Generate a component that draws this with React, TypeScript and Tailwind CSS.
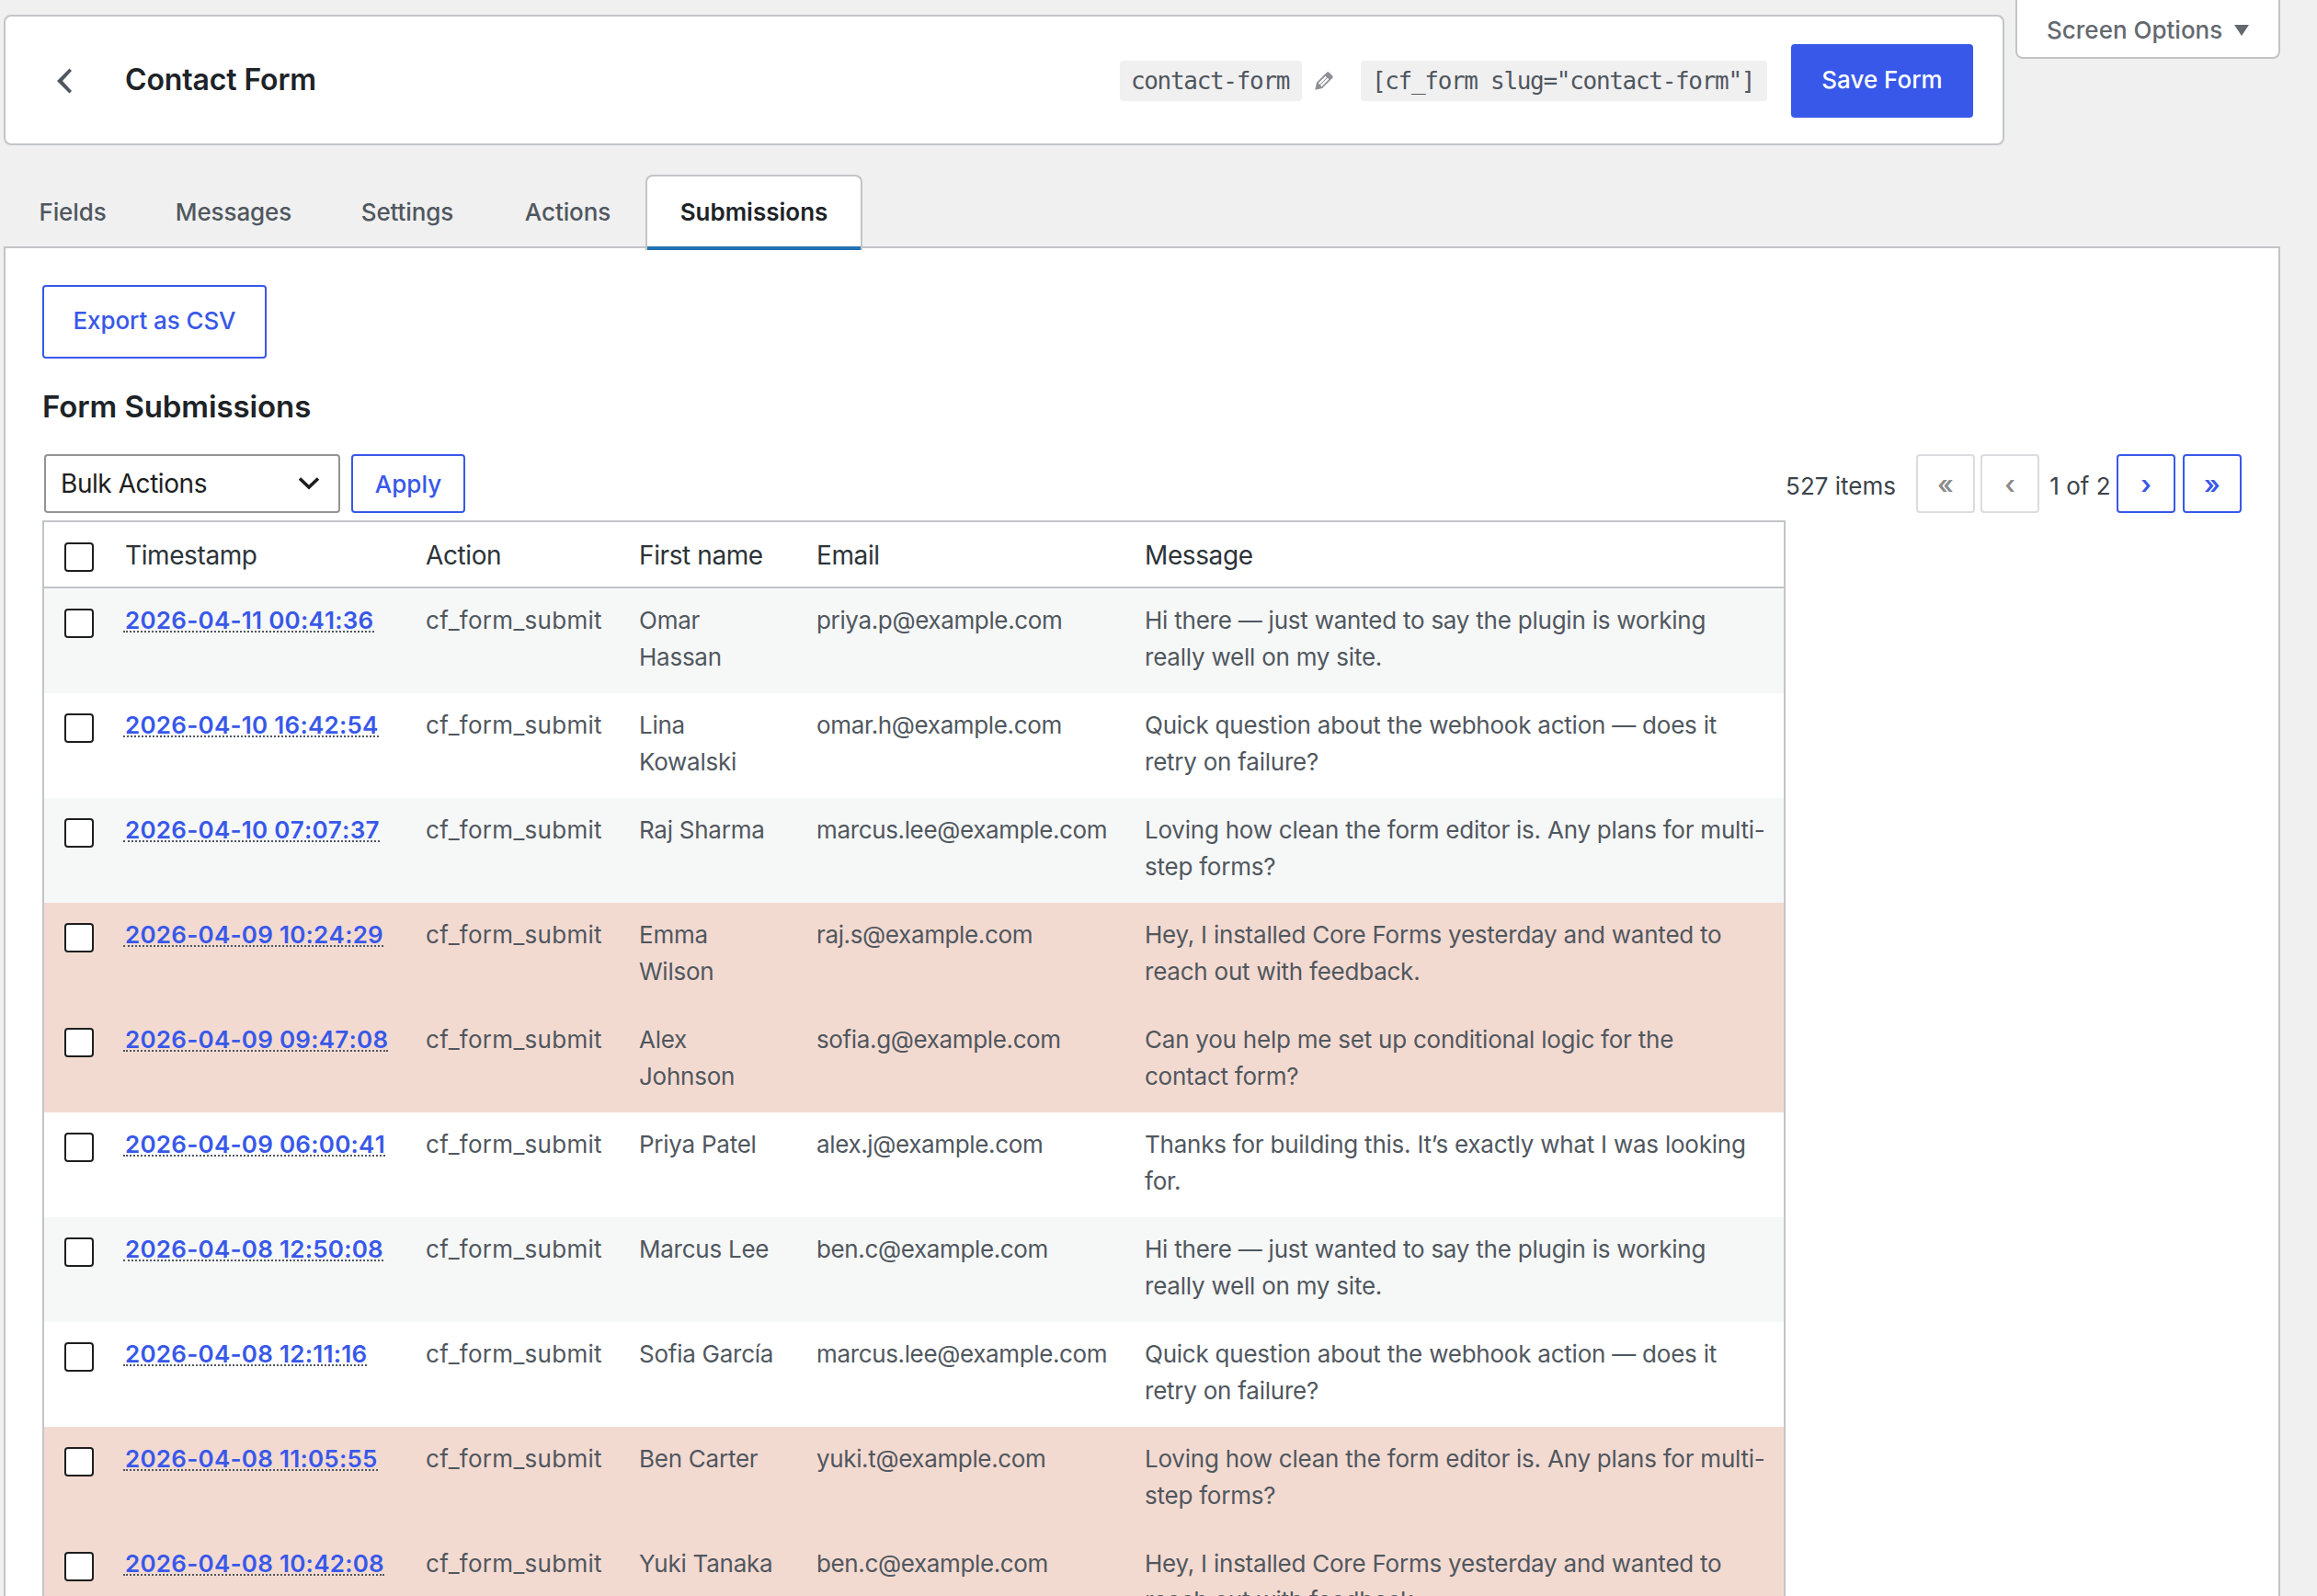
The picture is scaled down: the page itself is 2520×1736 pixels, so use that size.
import React from 'react';

const tabs = [
    { label: 'Fields', width: 'w-[148px] pl-0.5' },
    { label: 'Messages', width: 'w-[201px] pl-[3px]' },
    { label: 'Settings', width: 'w-[180px]' },
    { label: 'Actions', width: 'w-[169px]' },
    { label: 'Submissions', width: 'w-[236px]', active: true },
];

const messages = [
    ['Hi there — just wanted to say the plugin is working', 'really well on my site.'],
    ['Quick question about the webhook action — does it', 'retry on failure?'],
    ['Loving how clean the form editor is. Any plans for multi-', 'step forms?'],
    ['Hey, I installed Core Forms yesterday and wanted to', 'reach out with feedback.'],
    ['Can you help me set up conditional logic for the', 'contact form?'],
    ['Thanks for building this. It’s exactly what I was looking', 'for.'],
];

const rows = [
    { time: '2026-04-11 00:41:36', name: ['Omar', 'Hassan'], email: 'priya.p@example.com', message: messages[0] },
    { time: '2026-04-10 16:42:54', name: ['Lina', 'Kowalski'], email: 'omar.h@example.com', message: messages[1] },
    { time: '2026-04-10 07:07:37', name: ['Raj Sharma'], email: 'marcus.lee@example.com', message: messages[2] },
    { time: '2026-04-09 10:24:29', name: ['Emma', 'Wilson'], email: 'raj.s@example.com', message: messages[3], spam: true },
    { time: '2026-04-09 09:47:08', name: ['Alex', 'Johnson'], email: 'sofia.g@example.com', message: messages[4], spam: true },
    { time: '2026-04-09 06:00:41', name: ['Priya Patel'], email: 'alex.j@example.com', message: messages[5] },
    { time: '2026-04-08 12:50:08', name: ['Marcus Lee'], email: 'ben.c@example.com', message: messages[0] },
    { time: '2026-04-08 12:11:16', name: ['Sofia García'], email: 'marcus.lee@example.com', message: messages[1] },
    { time: '2026-04-08 11:05:55', name: ['Ben Carter'], email: 'yuki.t@example.com', message: messages[2], spam: true },
    { time: '2026-04-08 10:42:08', name: ['Yuki Tanaka'], email: 'ben.c@example.com', message: messages[3], spam: true },
];

const rowColor = (spam: boolean | undefined, index: number) => {
    if (spam) return 'bg-[#f3dad1]';
    return index % 2 === 0 ? 'bg-[#f6f7f7]' : 'bg-white';
};

const Checkbox = () => (
    <span className="mt-[22px] ml-[22px] block h-8 w-8 rounded-[4px] border-2 border-[#1e1e1e] bg-white" />
);

const Lines = ({ lines, tracking }: { lines: string[]; tracking: string }) => (
    <div className={`pt-[15px] whitespace-nowrap ${tracking}`}>
        {lines.map((line) => (
            <div key={line}>{line}</div>
        ))}
    </div>
);

const codeStyle =
    "flex h-11 items-center justify-center rounded-[4px] bg-[#f0f0f1] pr-0.5 pb-px font-['DejaVu_Sans_Mono',monospace] text-[26px] tracking-[-1.3px] text-[#50575e]";

const Header = () => (
    <div className="mt-4 flex h-[142px] w-[2176px] items-center rounded-lg border-2 border-[#c3c4c7] bg-white pt-0.5 pr-8">
        <svg className="ml-[54px] h-7 w-5" viewBox="0 0 20 28" fill="#50575e">
            <path d="M15.5 0.5 L18 3 L8 14 L18 25 L15.5 27.5 L2 14 Z" />
        </svg>
        <h1 className="ml-14 pb-0.5 text-[32px] font-semibold tracking-[-0.13px] text-[#1d2327]">Contact Form</h1>
        <div className="ml-auto flex items-center">
            <code className={`${codeStyle} w-[198px]`}>contact-form</code>
            {/* slug edit icon */}
            <svg className="ml-2.5 h-7 w-7" viewBox="0 0 20 20" fill="#8c8f94">
                <path d="M13.89 3.39l2.71 2.72c.46.46.42 1.24.03 1.64l-8.01 8.02-5.56 1.16 1.16-5.58s7.6-7.63 7.99-8.03c.39-.39 1.22-.39 1.68.07zm-2.73 2.79l-5.59 5.61 1.11 1.11 5.54-5.65zm-2.97 8.23l5.58-5.6-1.07-1.08-5.59 5.6z" />
            </svg>
            <code className={`${codeStyle} ml-[26px] w-[442px]`}>[cf_form slug="contact-form"]</code>
            <button className="ml-[26px] h-20 w-[198px] rounded-[4px] bg-[#3858e9] pb-0.5 font-medium text-white">
                Save Form
            </button>
        </div>
    </div>
);

const Tabs = () => (
    <div className="relative z-10 mt-8 flex h-[82px]">
        {tabs.map((tab) => (
            <div
                key={tab.label}
                className={`${tab.width} flex items-center justify-center ${
                    tab.active
                        ? 'relative rounded-t-lg border-2 border-b-0 border-[#c3c4c7] bg-white pb-0.5 font-semibold text-[#1d2327]'
                        : 'font-medium tracking-[-0.1px] text-[#50575e]'
                }`}
            >
                {tab.label}
                {tab.active && <span className="absolute inset-x-0 bottom-0 h-1 bg-[#2271b1]" />}
            </div>
        ))}
    </div>
);

const pageButton = 'h-16 w-16 rounded-[4px] border-2 pt-0.5 text-[28px] font-semibold';

const Pagination = () => (
    <div className="ml-auto flex items-center text-[#3c434a]">
        <span className="mr-[22px] pt-[5px]">527 items</span>
        <button className={`${pageButton} mr-1.5 border-[#dcdcde] text-[#8c8c8c]`}>«</button>
        <button className={`${pageButton} border-[#dcdcde] text-[#8c8c8c]`}>‹</button>
        <span className="w-[84px] pt-[5px] pl-[5px] text-center">1 of 2</span>
        <button className={`${pageButton} mr-2 border-[#3858e9] text-[#3858e9]`}>›</button>
        <button className={`${pageButton} border-[#3858e9] text-[#3858e9]`}>»</button>
    </div>
);

const cols = 'grid grid-cols-[86px_329px_232px_193px_357px_1fr]';

const SubmissionsTable = () => (
    <div className="mt-2 w-[1896px] border-2 border-[#c3c4c7]">
        <div
            className={`${cols} h-[72px] border-b-2 border-[#c3c4c7] text-[28px] leading-[72px] tracking-[-0.4px] text-[#2c3338]`}
        >
            <Checkbox />
            <span className="pl-0.5">Timestamp</span>
            <span>Action</span>
            <span>First name</span>
            <span>Email</span>
            <span>Message</span>
        </div>
        {rows.map((row, index) => (
            <div key={row.time} className={`${cols} h-[114px] leading-10 text-[#50575e] ${rowColor(row.spam, index)}`}>
                <Checkbox />
                <div className="pt-[15px]">
                    <span className="inline-block h-[33px] border-b-2 border-dotted border-[#50575e] pl-0.5">
                        <a className="font-semibold tracking-[0.25px] text-[#3858e9] [font-kerning:none]">{row.time}</a>
                    </span>
                </div>
                <Lines lines={['cf_form_submit']} tracking="tracking-[0.29px]" />
                <Lines lines={row.name} tracking="tracking-[-0.25px]" />
                <Lines lines={[row.email]} tracking="tracking-[-0.36px]" />
                <Lines lines={row.message} tracking="tracking-[-0.23px]" />
            </div>
        ))}
    </div>
);

export default function App() {
    return (
        <div className="relative h-[1736px] w-[2520px] overflow-hidden bg-[#f0f0f1] px-1 font-['Inter',sans-serif] text-[26px] leading-10">
            {/* Screen options toggle */}
            <div className="absolute top-0 right-10 flex h-16 w-[288px] items-center rounded-b-lg border-2 border-t-0 border-[#c3c4c7] bg-white pt-[3px] pl-8 text-[#646970]">
                <span className="font-medium">Screen Options</span>
                <svg className="ml-[13px] h-3 w-4" viewBox="0 0 16 12" fill="#646970">
                    <path d="M0 0 H16 L8 12 Z" />
                </svg>
            </div>
            <Header />
            <Tabs />
            <div className="-mt-1 h-[1600px] w-[2476px] border-2 border-[#c3c4c7] bg-white px-10 pt-10">
                <button className="h-20 w-[244px] rounded-[4px] border-2 border-[#3858e9] pb-0.5 font-medium tracking-[-0.1px] text-[#3858e9]">
                    Export as CSV
                </button>
                <h2 className="mt-8 text-[33px] leading-10 font-semibold tracking-[-0.1px] text-[#1d2327]">
                    Form Submissions
                </h2>
                <div className="mt-8 flex h-16 items-center">
                    <div className="ml-0.5 flex h-16 w-[322px] items-center justify-between rounded-[4px] border-2 border-[#949494] pr-5 pl-4 text-[28px] tracking-[-0.44px] text-[#1e1e1e]">
                        <span>Bulk Actions</span>
                        <svg className="h-3.5 w-6" viewBox="0 0 24 14" fill="none" stroke="#1e1e1e" strokeWidth="3.6">
                            <path d="M2 1.5 L12 11 L22 1.5" />
                        </svg>
                    </div>
                    <button className="ml-3 h-16 w-[124px] rounded-[4px] border-2 border-[#3858e9] pt-0.5 font-medium text-[#3858e9]">
                        Apply
                    </button>
                    <Pagination />
                </div>
                <SubmissionsTable />
            </div>
        </div>
    );
}
